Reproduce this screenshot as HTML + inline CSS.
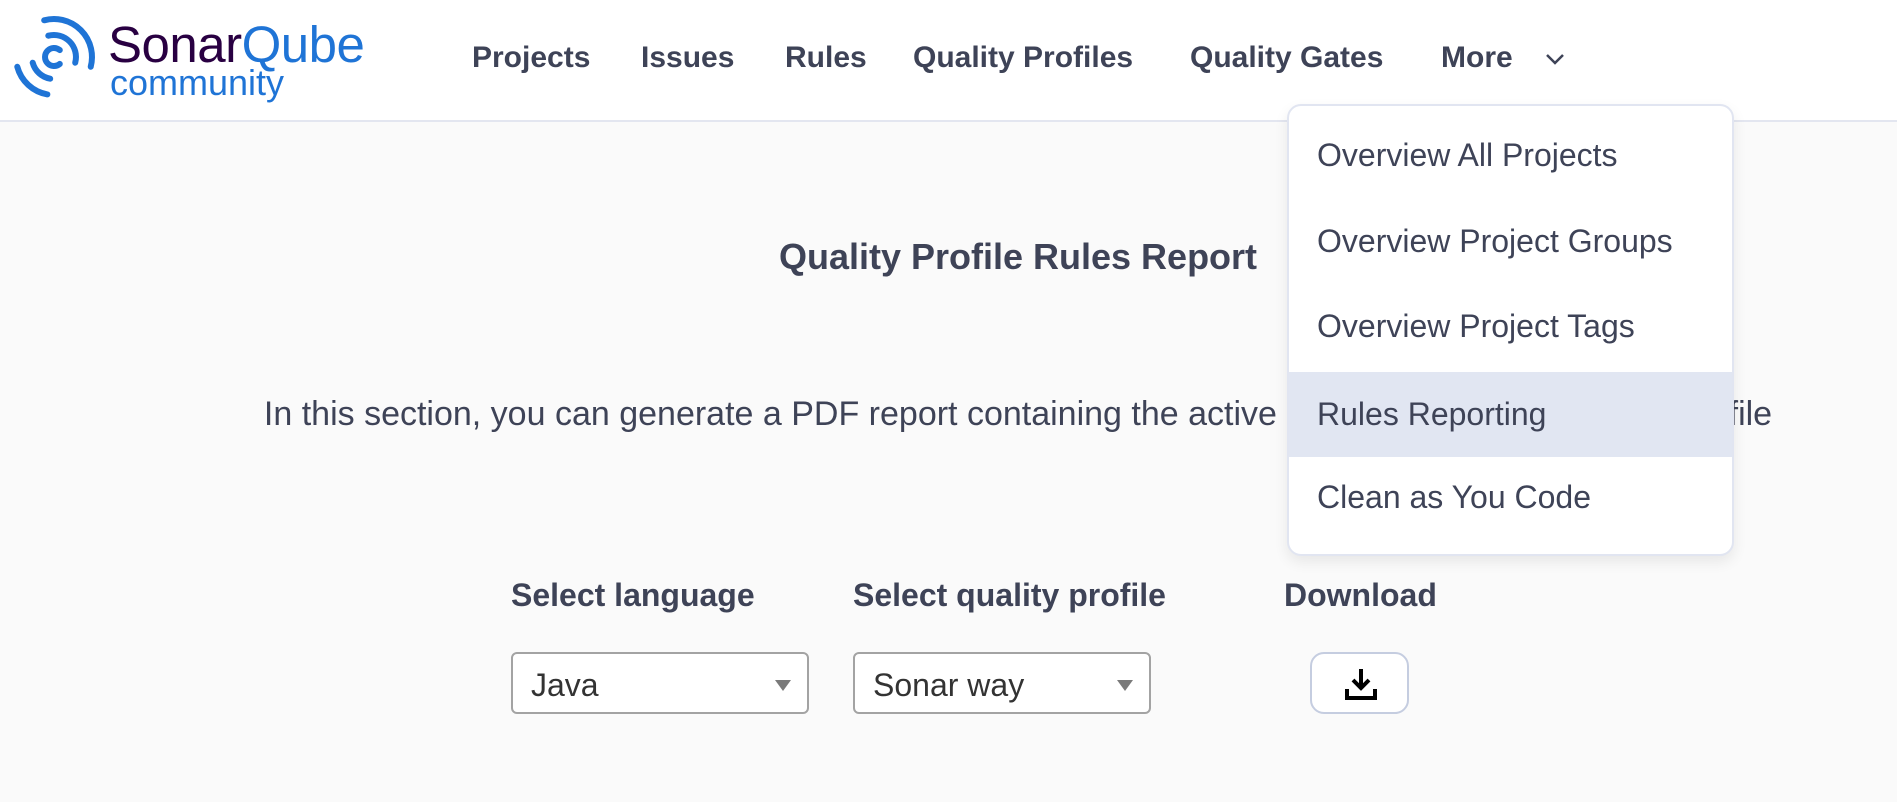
<!DOCTYPE html>
<html><head><style>
body{margin:0;width:1897px;height:802px;background:#fafafa;font-family:"Liberation Sans",sans-serif;position:relative;overflow:hidden;color:#3e4357}
.hdr{position:absolute;left:0;top:0;width:1897px;height:120px;background:#fff;border-bottom:2px solid #e3e6f0}
.nav{position:absolute;top:41px;font-size:30px;font-weight:bold;color:#3e4357}
.dd{position:absolute;left:1287px;top:104px;width:443px;height:448px;background:#fff;border:2px solid #e1e5f1;border-radius:14px;box-shadow:0 6px 14px rgba(0,0,0,.08);overflow:hidden}
.it{position:absolute;left:0;width:443px;height:85px;line-height:85px;padding-left:28px;box-sizing:border-box;font-size:32px;color:#3e4357;white-space:nowrap}
.lab{position:absolute;top:577px;font-size:32px;font-weight:bold;color:#3e4357}
.sel{position:absolute;top:652px;height:62px;width:298px;box-sizing:border-box;border:2px solid #a3a3a3;border-radius:6px;background:#fff;font-size:32px;line-height:62px;padding-left:18px;color:#333}
.sel:after{content:"";position:absolute;right:16px;top:26px;border-left:8px solid transparent;border-right:8px solid transparent;border-top:11px solid #7a7a7a}
</style></head><body>
<div class="hdr">
<svg style="position:absolute;left:8px;top:3px" width="100" height="100" viewBox="0 0 100 100" fill="none" stroke="#1f74d6" stroke-width="6" stroke-linecap="round">
<path d="M51.8 47.1 A9 9 0 1 0 51.8 60.9"/>
<path d="M40.3 32.7 A22 22 0 0 1 67.2 59.7"/>
<path d="M36.2 17.3 A38 38 0 0 1 82.7 63.8"/>
<path d="M24.7 59.7 A22 22 0 0 0 42.2 75.7"/>
<path d="M9.3 63.8 A38 38 0 0 0 39.4 91.4"/>
</svg>
<div style="position:absolute;left:108px;top:18px;font-size:51px;letter-spacing:-0.5px;line-height:54px"><span style="color:#290042">Sonar</span><span style="color:#1f74d6">Qube</span></div>
<div style="position:absolute;left:110px;top:64px;font-size:36px;color:#1f74d6;line-height:38px">community</div>
<div class="nav" style="left:472px">Projects</div>
<div class="nav" style="left:641px">Issues</div>
<div class="nav" style="left:785px">Rules</div>
<div class="nav" style="left:913px">Quality Profiles</div>
<div class="nav" style="left:1190px">Quality Gates</div>
<div class="nav" style="left:1441px">More</div>
<svg style="position:absolute;left:1545px;top:53px" width="20" height="12" viewBox="0 0 20 12" fill="none" stroke="#3e4357" stroke-width="2.5"><path d="M2 2 L10 10 L18 2"/></svg>
</div>
<div style="position:absolute;left:0;width:2036px;top:236px;text-align:center;font-size:36px;font-weight:bold;color:#3e4357">Quality Profile Rules Report</div>
<div style="position:absolute;left:0;width:2036px;top:395px;text-align:center;font-size:34px;color:#3e4357;white-space:nowrap">In this section, you can generate a PDF report containing the active rules of a selected quality profile</div>
<div class="dd">
<div class="it" style="top:7px">Overview All Projects</div>
<div class="it" style="top:93px">Overview Project Groups</div>
<div class="it" style="top:178px">Overview Project Tags</div>
<div class="it" style="top:266px;background:#e1e6f2">Rules Reporting</div>
<div class="it" style="top:349px">Clean as You Code</div>
</div>
<div class="lab" style="left:511px">Select language</div>
<div class="lab" style="left:853px">Select quality profile</div>
<div class="lab" style="left:1284px">Download</div>
<div class="sel" style="left:511px">Java</div>
<div class="sel" style="left:853px">Sonar way</div>
<div style="position:absolute;left:1310px;top:652px;width:99px;height:62px;box-sizing:border-box;border:2px solid #c5cde0;border-radius:14px;background:#fff">
<svg style="position:absolute;left:32px;top:13px" width="34" height="34" viewBox="0 0 34 34" fill="none" stroke="#000" stroke-width="4"><path d="M17 2 V20"/><path d="M9 13 L17 21 L25 13"/><path d="M3 22 V31 H31 V22"/></svg>
</div>
</body></html>
